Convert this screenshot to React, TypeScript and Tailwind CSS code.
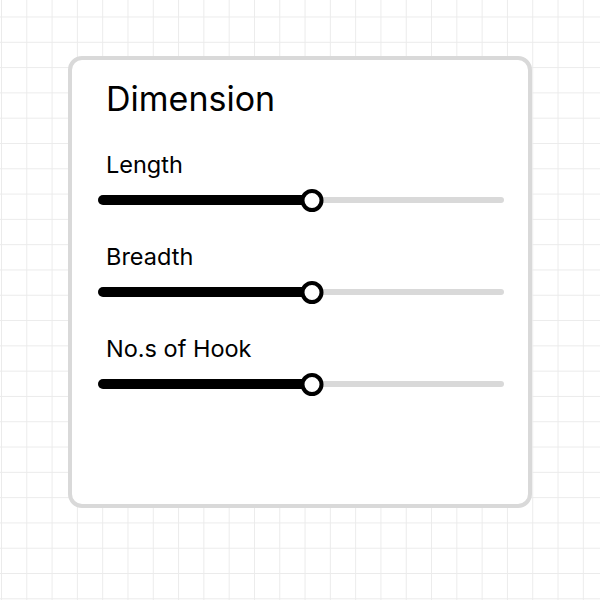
import React from 'react';

const sliders = [
  { label: 'Length', value: 52.7 },
  { label: 'Breadth', value: 52.7 },
  { label: 'No.s of Hook', value: 52.7 },
];

function Slider({ label, value }: { label: string; value: number }) {
  return (
    <div className="flex flex-col">
      <span className="ml-[8px] text-[23.5px] leading-[28px] text-black">{label}</span>
      <div className="relative mt-[9px] flex h-[24px] items-center">
        {/* track */}
        <div className="h-[6px] w-full rounded-full bg-[#d9d9d9]" />
        {/* filled part */}
        <div
          className="absolute left-0 h-[10px] rounded-full bg-black"
          style={{ width: `${value}%` }}
        />
        {/* thumb */}
        <div
          className="absolute h-[23px] w-[23px] -translate-x-1/2 rounded-full border-[4px] border-black bg-white"
          style={{ left: `${value}%` }}
        />
      </div>
    </div>
  );
}

export default function App() {
  return (
    <div className="flex min-h-screen w-full justify-center bg-white bg-[linear-gradient(to_right,#ebebeb_1px,transparent_1px),linear-gradient(to_bottom,#ebebeb_1px,transparent_1px)] bg-[length:25.3px_25.3px] bg-[position:1px_16.5px] pt-[56px] font-['Inter',sans-serif]">
      <div className="h-[452px] w-[464px] rounded-[14px] border-[4px] border-[#d9d9d9] bg-white pl-[26px] pr-[24px] pt-[17px]">
        <h1 className="ml-[8px] text-[34px] leading-[44px] text-black">Dimension</h1>
        <div className="mt-[30px] flex flex-col gap-[31px]">
          {sliders.map((s) => (
            <Slider key={s.label} label={s.label} value={s.value} />
          ))}
        </div>
      </div>
    </div>
  );
}
